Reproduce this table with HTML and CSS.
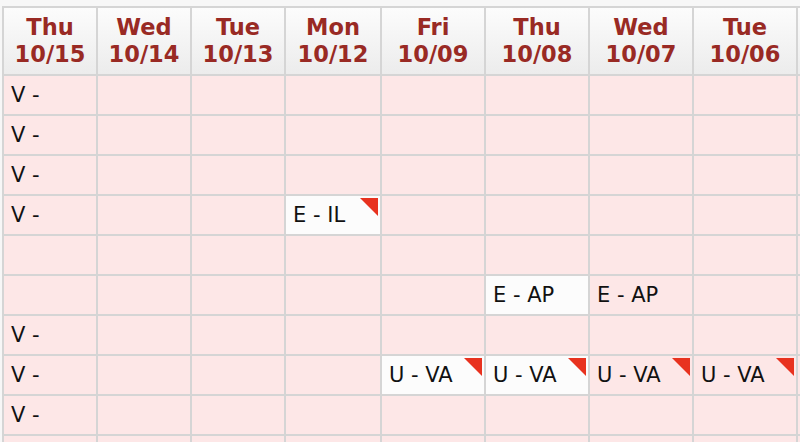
FILE: index.html
```html
<!DOCTYPE html>
<html>
<head>
<meta charset="utf-8">
<link rel="stylesheet" href="styles.css">
</head>
<body>
<div class="grid">
  <div class="hd">Thu<br>10/15</div>
  <div class="hd">Wed<br>10/14</div>
  <div class="hd">Tue<br>10/13</div>
  <div class="hd">Mon<br>10/12</div>
  <div class="hd">Fri<br>10/09</div>
  <div class="hd">Thu<br>10/08</div>
  <div class="hd">Wed<br>10/07</div>
  <div class="hd">Tue<br>10/06</div>
  <div class="hd"></div>

  <div class="c">V -</div><div class="c"></div><div class="c"></div><div class="c"></div><div class="c"></div><div class="c"></div><div class="c"></div><div class="c"></div><div class="c"></div>
  <div class="c">V -</div><div class="c"></div><div class="c"></div><div class="c"></div><div class="c"></div><div class="c"></div><div class="c"></div><div class="c"></div><div class="c"></div>
  <div class="c">V -</div><div class="c"></div><div class="c"></div><div class="c"></div><div class="c"></div><div class="c"></div><div class="c"></div><div class="c"></div><div class="c"></div>
  <div class="c">V -</div><div class="c"></div><div class="c"></div><div class="c w flag">E - IL</div><div class="c"></div><div class="c"></div><div class="c"></div><div class="c"></div><div class="c"></div>
  <div class="c"></div><div class="c"></div><div class="c"></div><div class="c"></div><div class="c"></div><div class="c"></div><div class="c"></div><div class="c"></div><div class="c"></div>
  <div class="c"></div><div class="c"></div><div class="c"></div><div class="c"></div><div class="c"></div><div class="c w">E - AP</div><div class="c">E - AP</div><div class="c"></div><div class="c"></div>
  <div class="c">V -</div><div class="c"></div><div class="c"></div><div class="c"></div><div class="c"></div><div class="c"></div><div class="c"></div><div class="c"></div><div class="c"></div>
  <div class="c">V -</div><div class="c"></div><div class="c"></div><div class="c"></div><div class="c w flag">U - VA</div><div class="c w flag">U - VA</div><div class="c flag">U - VA</div><div class="c flag">U - VA</div><div class="c"></div>
  <div class="c">V -</div><div class="c"></div><div class="c"></div><div class="c"></div><div class="c"></div><div class="c"></div><div class="c"></div><div class="c"></div><div class="c"></div>
  <div class="c"></div><div class="c"></div><div class="c"></div><div class="c"></div><div class="c"></div><div class="c"></div><div class="c"></div><div class="c"></div><div class="c"></div>
</div>
</body>
</html>
```
FILE: styles.css
```css
html, body {
  margin: 0;
  padding: 0;
  background: #f7f7f7;
  overflow: hidden;
  width: 800px;
  height: 442px;
}
.grid {
  display: grid;
  grid-template-columns: 94px 94px 94px 96px 104px 104px 104px 104px 104px;
  grid-auto-rows: 40px;
  grid-template-rows: 68px;
  margin: 6px 0 0 2px;
  width: 898px;
  border-left: 2px solid #d5d5d5;
  border-top: 2px solid #d5d5d5;
  font-family: "DejaVu Sans", Verdana, sans-serif;
}
.hd, .c {
  box-sizing: border-box;
  border-right: 2px solid #d5d5d5;
  border-bottom: 2px solid #d5d5d5;
}
.hd {
  background: linear-gradient(#fcfcfc, #ececec);
  color: #992a24;
  font-weight: bold;
  font-size: 22.5px;
  line-height: 27px;
  text-align: center;
  padding-top: 6px;
}
.c {
  background: #fde7e7;
  color: #111;
  font-size: 21px;
  display: flex;
  align-items: center;
  padding-left: 7px;
  position: relative;
}
.c.w {
  background: #fcfcfc;
}
.flag::after {
  content: "";
  position: absolute;
  top: 2px;
  right: 2px;
  width: 0;
  height: 0;
  border-style: solid;
  border-width: 0 18px 18px 0;
  border-color: transparent #e8321f transparent transparent;
}
```
